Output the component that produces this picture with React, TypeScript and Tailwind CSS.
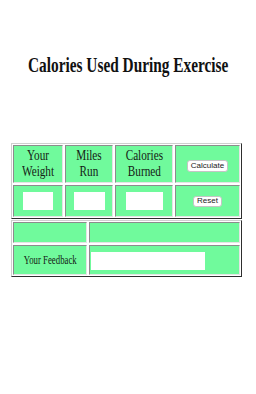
const SERIF = "font-['Liberation_Serif','Times_New_Roman',serif]";
const SANS = "font-['Liberation_Sans',Arial,sans-serif]";

const CELL =
  "flex items-center justify-center bg-[#70fa9c] border border-t-[#8c8c8c] border-l-[#8c8c8c] border-b-[#e4e4e4] border-r-[#e4e4e4]";

const TABLE =
  "ml-[11px] grid gap-[2px] bg-white p-px border border-t-[#cfcfcf] border-l-[#cfcfcf] border-b-[#2e2e2e] border-r-[#2e2e2e]";

function HeadCell({ lines }: { lines: [string, string] }) {
  return (
    <div className={CELL}>
      <span
        className={`${SERIF} inline-block scale-x-[0.8] text-center text-[14px] leading-[16px] text-[#142014]`}
      >
        {lines[0]}
        <br />
        {lines[1]}
      </span>
    </div>
  );
}

function Button({ label, className }: { label: string; className: string }) {
  return (
    <button
      className={`${SANS} flex items-center justify-center rounded-[3px] border border-[#c4c4c4] bg-white text-[8px] leading-none text-[#222] ${className}`}
    >
      {label}
    </button>
  );
}

export default function App() {
  return (
    <div className="h-[394px] w-[256px] overflow-hidden bg-white">
      <h1
        className={`${SERIF} flex justify-center overflow-hidden pt-[53px] text-[21px] font-bold leading-[24px] text-[#111]`}
      >
        <span className="inline-block shrink-0 scale-x-[0.73] whitespace-nowrap">
          Calories Used During Exercise
        </span>
      </h1>

      <div
        className={`${TABLE} mt-[66px] w-[231px] grid-cols-[50px_48px_58px_65px] grid-rows-[38px_32px]`}
      >
        <HeadCell lines={["Your", "Weight"]} />
        <HeadCell lines={["Miles", "Run"]} />
        <HeadCell lines={["Calories", "Burned"]} />
        <div className={`${CELL} pt-[4px]`}>
          <Button label="Calculate" className="h-[12px] w-[41px]" />
        </div>

        <div className={CELL}>
          <input className="h-[18px] w-[30px] bg-white outline-none" />
        </div>
        <div className={CELL}>
          <input className="h-[18px] w-[31px] bg-white outline-none" />
        </div>
        <div className={CELL}>
          <input className="h-[18px] w-[37px] bg-white outline-none" />
        </div>
        <div className={CELL}>
          <Button label="Reset" className="h-[11px] w-[29px]" />
        </div>
      </div>

      <div
        className={`${TABLE} mt-[1px] w-[231px] grid-cols-[74px_151px] grid-rows-[21px_30px]`}
      >
        <div className={CELL} />
        <div className={CELL} />
        <div className={CELL}>
          <span
            className={`${SERIF} inline-block scale-x-[0.73] whitespace-nowrap text-[12px] leading-[14px] text-[#142014]`}
          >
            Your Feedback
          </span>
        </div>
        <div className={`${CELL} justify-start pl-px pt-[2px]`}>
          <input className="h-[18px] w-[114px] bg-white outline-none" />
        </div>
      </div>
    </div>
  );
}
